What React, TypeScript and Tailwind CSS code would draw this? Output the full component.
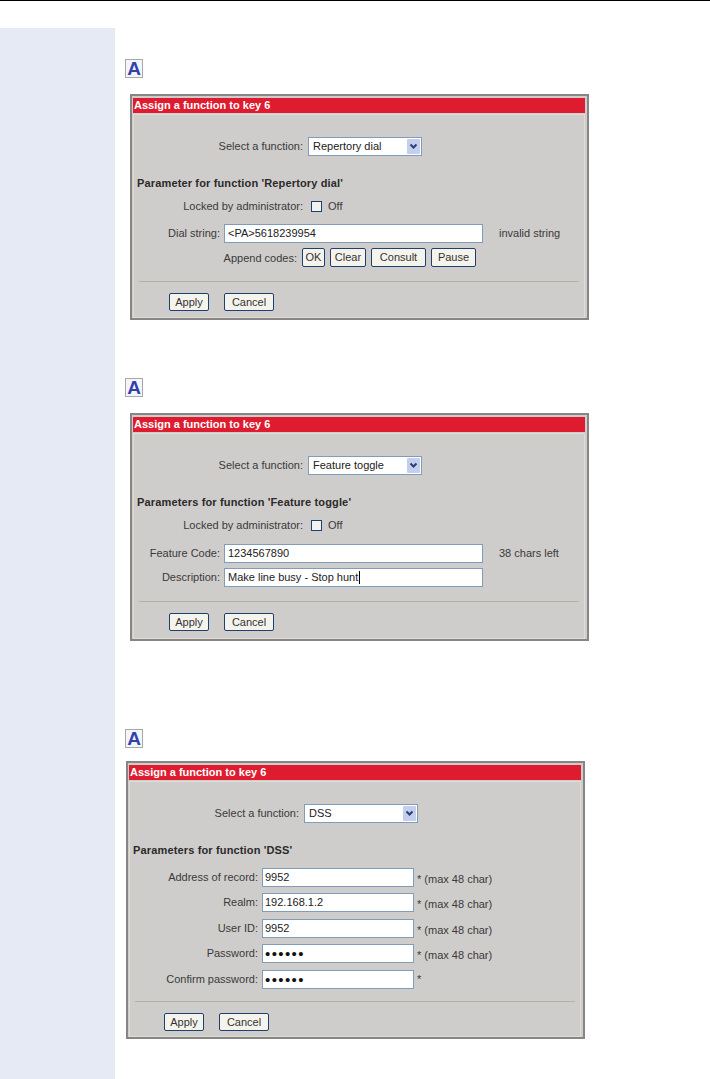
import { ReactNode } from 'react';

const labelText = "text-[11px] leading-[14px] text-[#3a3a3a]";

function NoteIcon() {
  return (
    <div className="ml-[10px] flex h-[19px] w-[18px] items-center justify-center overflow-hidden border border-[#a8a8a8] bg-[#f4f5fb] font-['Liberation_Sans',sans-serif] text-[19px] font-bold leading-none text-[#3342ab]">
      A
    </div>
  );
}

function Btn({ children, width }: { children: ReactNode; width: string }) {
  return (
    <div className={`flex h-[18px] items-center justify-center rounded-[2px] border border-[#1f3f70] bg-[#f5f4ec] text-[11px] text-[#333] ${width}`}>
      {children}
    </div>
  );
}

function FuncSelect({ value }: { value: string }) {
  return (
    <div className="flex h-[19px] w-[114px] items-center justify-between border border-[#7f9db9] bg-white pl-[4px] pr-[1px] text-[11px] text-[#222]">
      <span>{value}</span>
      <span className="flex h-[15px] w-[13px] items-center justify-center rounded-[1px] bg-[#c3cfec]">
        <svg width="9" height="7" viewBox="0 0 9 7">
          <path d="M1.5 1.5 L4.5 4.5 L7.5 1.5" fill="none" stroke="#2c3f78" strokeWidth="2" />
        </svg>
      </span>
    </div>
  );
}

function TextBox({ children, width, pad }: { children?: ReactNode; width: string; pad: string }) {
  return (
    <div className={`flex h-[19px] items-center border border-[#7f9db9] bg-white text-[11px] text-[#222] ${pad} ${width}`}>
      {children}
    </div>
  );
}

function Dots() {
  return <span className="text-[15px] leading-[17px] tracking-[1.4px] text-[#111]">••••••</span>;
}

function Row({ label, labelWidth, children, className }: { label: string; labelWidth: string; children: ReactNode; className: string }) {
  return (
    <div className={`flex items-center ${className}`}>
      <div className={`pb-[2px] text-right ${labelText} ${labelWidth}`}>{label}</div>
      {children}
    </div>
  );
}

function LockedRow() {
  return (
    <div className="mt-[9px] flex h-[14px] items-center">
      <div className={`w-[169px] text-right ${labelText}`}>Locked by administrator:</div>
      <div className="ml-[8px] h-[11px] w-[11px] border border-[#1f3f70] bg-[#f3f3ee]" />
      <div className={`ml-[6px] ${labelText}`}>Off</div>
    </div>
  );
}

function Panel({ indent, bottom, hrTop, btnIndent, children }: { indent: string; bottom: string; hrTop: string; btnIndent: string; children: ReactNode }) {
  return (
    <div className={`w-[459px] border-2 border-[#868686] bg-[#cfcdcb] pb-0 pl-[1px] pr-[2px] pt-[2px] ${indent}`}>
      <div className="flex h-[15px] items-center bg-[#df1c2f] pl-[1px] text-[11px] font-bold text-white">
        Assign a function to key 6
      </div>
      <div className={`mt-[1px] border border-[#dfddd2] ${bottom}`}>
        {children}
        <div className={`mx-[5px] h-[1px] bg-[#b4b3a2] ${hrTop}`} />
        <div className={`mt-[11px] flex gap-[15px] ${btnIndent}`}>
          <Btn width="w-[40px]">Apply</Btn>
          <Btn width="w-[50px]">Cancel</Btn>
        </div>
      </div>
    </div>
  );
}

function Heading({ children }: { children: ReactNode }) {
  return <div className="ml-[3px] mt-[20px] h-[14px] text-[11px] font-bold leading-[14px] tracking-[0.15px] text-[#2a2a2a]">{children}</div>;
}

function SelectRow({ value, top }: { value: string; top: string }) {
  return (
    <Row label="Select a function:" labelWidth="w-[169px]" className={top}>
      <div className="ml-[5px]">
        <FuncSelect value={value} />
      </div>
    </Row>
  );
}

function AddressRow({ label, top, children, note }: { label: string; top: string; children?: ReactNode; note: string }) {
  return (
    <Row label={label} labelWidth="w-[128px]" className={top}>
      <div className="ml-[4px]">
        <TextBox width="w-[152px]" pad="pl-[2px]">{children}</TextBox>
      </div>
      <div className={`ml-[3px] ${note === '*' ? 'pb-[2px]' : 'pt-[2px]'} ${labelText}`}>{note}</div>
    </Row>
  );
}

export default function App() {
  return (
    <div className="flex h-[1079px] w-[710px] flex-col overflow-hidden bg-white font-['Liberation_Sans',sans-serif]">
      <div className="h-[1px] shrink-0 bg-black" />
      <div className="mt-[27px] flex flex-1">
        <aside className="w-[115px] shrink-0 bg-[#e6eaf5]" />
        <main className="flex flex-col pt-[31px]">
          <NoteIcon />
          <div className="mt-[16px]">
            <Panel indent="ml-[15px]" bottom="pb-[6px]" hrTop="mt-[14px]" btnIndent="ml-[35px]">
              <SelectRow value="Repertory dial" top="mt-[22px]" />
              <Heading>Parameter for function 'Repertory dial'</Heading>
              <LockedRow />
              <Row label="Dial string:" labelWidth="w-[86px]" className="mt-[11px]">
                <div className="ml-[4px]">
                  <TextBox width="w-[259px]" pad="pl-[3px]">&lt;PA&gt;5618239954</TextBox>
                </div>
                <div className={`ml-[16px] pb-[2px] ${labelText}`}>invalid string</div>
              </Row>
              <div className="mt-[5px] flex items-center">
                <div className={`w-[163px] text-right ${labelText}`}>Append codes:</div>
                <div className="ml-[5px] flex gap-[5px]">
                  <Btn width="w-[23px] !h-[19px]">OK</Btn>
                  <Btn width="w-[36px] !h-[19px]">Clear</Btn>
                  <Btn width="w-[55px] !h-[19px]">Consult</Btn>
                  <Btn width="w-[45px] !h-[19px]">Pause</Btn>
                </div>
              </div>
            </Panel>
          </div>
          <div className="mt-[58px]">
            <NoteIcon />
          </div>
          <div className="mt-[16px]">
            <Panel indent="ml-[15px]" bottom="pb-[7px]" hrTop="mt-[14px]" btnIndent="ml-[35px]">
              <SelectRow value="Feature toggle" top="mt-[22px]" />
              <Heading>Parameters for function 'Feature toggle'</Heading>
              <LockedRow />
              <Row label="Feature Code:" labelWidth="w-[86px]" className="mt-[12px]">
                <div className="ml-[4px]">
                  <TextBox width="w-[259px]" pad="pl-[3px]">1234567890</TextBox>
                </div>
                <div className={`ml-[16px] pb-[2px] ${labelText}`}>38 chars left</div>
              </Row>
              <Row label="Description:" labelWidth="w-[86px]" className="mt-[5px]">
                <div className="ml-[4px]">
                  <TextBox width="w-[259px]" pad="pl-[3px]">
                    Make line busy - Stop hunt
                    <span className="ml-[1px] h-[13px] w-[1px] bg-black" />
                  </TextBox>
                </div>
              </Row>
            </Panel>
          </div>
          <div className="mt-[88px]">
            <NoteIcon />
          </div>
          <div className="mt-[13px]">
            <Panel indent="ml-[11px]" bottom="pb-[5px]" hrTop="mt-[12px]" btnIndent="ml-[34px]">
              <SelectRow value="DSS" top="mt-[22px]" />
              <Heading>Parameters for function 'DSS'</Heading>
              <AddressRow label="Address of record:" top="mt-[11px]" note="* (max 48 char)">9952</AddressRow>
              <AddressRow label="Realm:" top="mt-[6px]" note="* (max 48 char)">192.168.1.2</AddressRow>
              <AddressRow label="User ID:" top="mt-[7px]" note="* (max 48 char)">9952</AddressRow>
              <AddressRow label="Password:" top="mt-[6px]" note="* (max 48 char)"><Dots /></AddressRow>
              <AddressRow label="Confirm password:" top="mt-[7px]" note="*"><Dots /></AddressRow>
            </Panel>
          </div>
        </main>
      </div>
    </div>
  );
}
